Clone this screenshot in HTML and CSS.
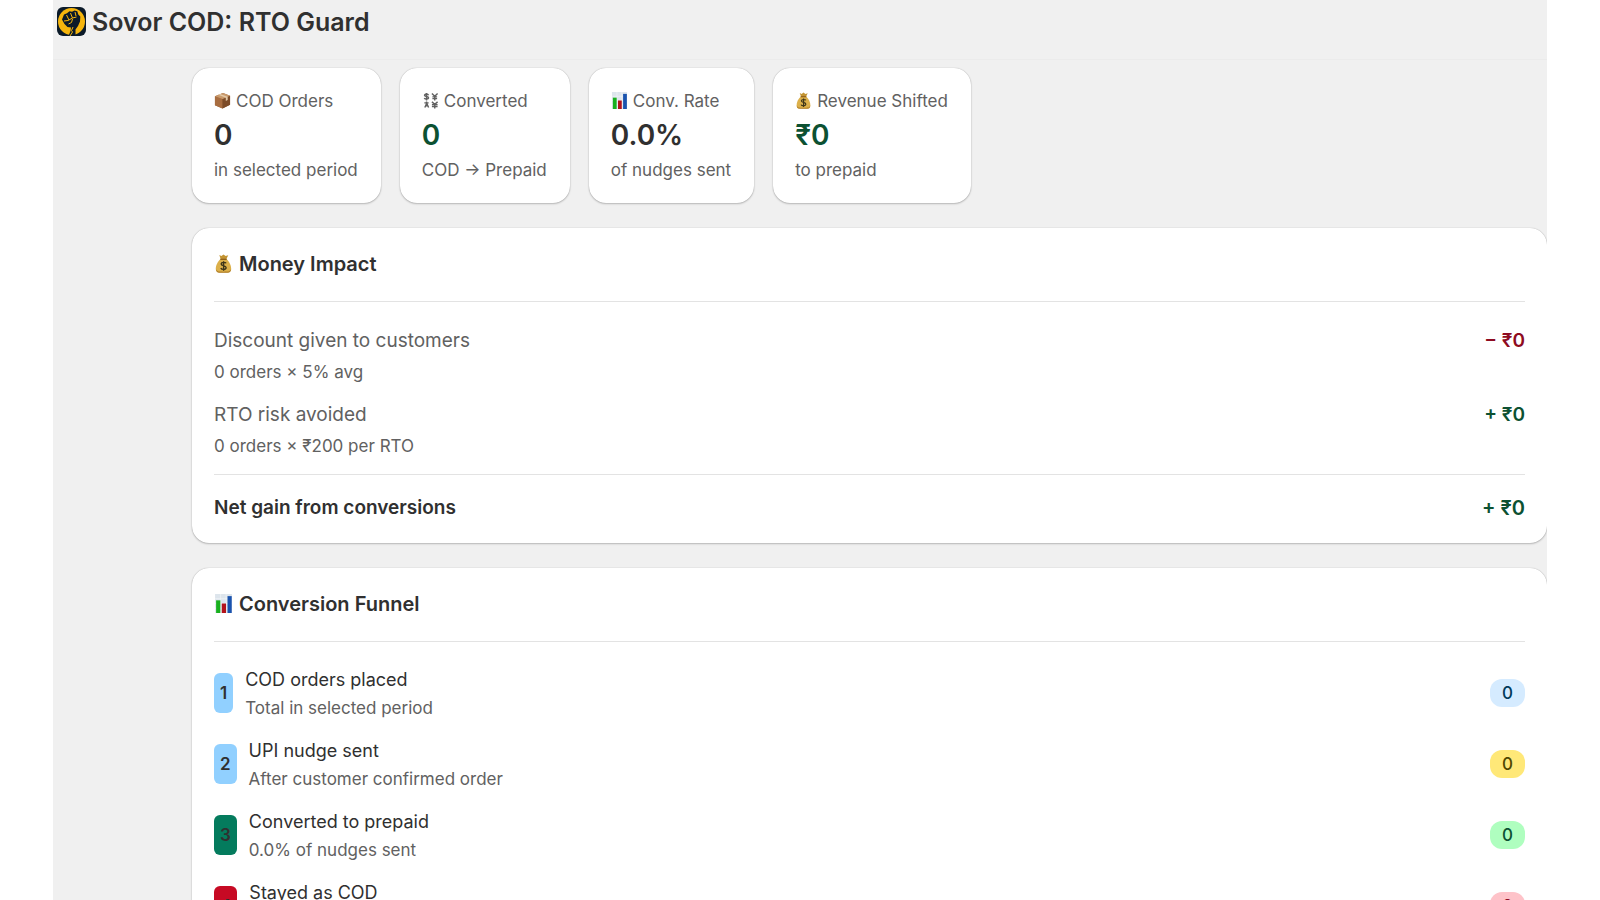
FILE: index.html
```html
<!DOCTYPE html>
<html lang="en">
<head>
<meta charset="utf-8">
<meta name="viewport" content="width=device-width, initial-scale=1">
<title>Sovor COD: RTO Guard</title>
<link rel="stylesheet" href="styles.css">
</head>
<body>
<svg class="defs" aria-hidden="true">
  <symbol id="bag" viewBox="0 0 18 18">
    <path d="M5 1l2 1 2-1.500 2 1.500 2.500-.7-2 4h-5z" fill="#c39432"/>
    <path d="M6.500 4.500h5c3 2.500 5 6.500 4.800 10-.1 2-1.500 3-3.300 3H5c-1.800 0-3.200-1-3.300-3-.2-3.500 1.800-7.500 4.800-10z" fill="#dcb04a"/>
    <path d="M2 14c.5 2.500 2 2.700 7 2.700s6.500-.2 7-2.700c.3 2.500-1 3.700-3 3.700H5c-2 0-3.300-1.200-3-3.700z" fill="#b07f28"/>
    <path d="M6 5h6" stroke="#8a5a17" stroke-width="1.200"/>
    <path d="M11.500 8.800C11 7.800 7 7.300 6.800 9.400 6.700 11.500 11.600 10.600 11.500 13c-.2 2.200-4.500 2-5 .3M9.100 6.800v9" fill="none" stroke="#3d3519" stroke-width="1.300"/>
  </symbol>
  <symbol id="chart" viewBox="0 0 18 18">
    <path d="M1 0h16v18H1z" fill="#dde5ec"/>
    <path d="M1 4.500h16M1 9h16M1 13.500h16M6.300 0v18M11.500 0v18" stroke="#f4f7fa" stroke-width=".6"/>
    <path d="M2 6h4v12H2z" fill="#18b01e"/>
    <path d="M7.400 9h4v9h-4z" fill="#b3131b"/>
    <path d="M12.800 2h4v16h-4z" fill="#1a53ae"/>
  </symbol>
  <symbol id="box" viewBox="0 0 18 18">
    <path d="M1 4.500L9.500 1 17 4v9.500L9 17.500 1 14z" fill="#9a6237"/>
    <path d="M1 4.500l8 3v10L1 14z" fill="#a86d40"/>
    <path d="M9 7.500L17 4v9.500l-8 4z" fill="#7d4c29"/>
    <path d="M1 4.500L9.500 1 17 4 9 7.500z" fill="#c99a6c"/>
    <path d="M4.500 3l8 3v3.500l2-1V5l-8-2.900z" fill="#e3c9a8"/>
  </symbol>
  <symbol id="exchange" viewBox="0 0 18 18">
    <g fill="none" stroke="currentColor" stroke-width="1.500">
      <path d="M7 3.500C6 1.500 2.500 2 2.700 3.600 2.900 5.200 7 4.400 7 6.300 6.800 8 3.200 8 2.400 6.400M4.800 1v8"/>
      <path d="M10.500 1.500l3 3 3-3M13.500 4.500V9M11 5.200h5M11 7h5"/>
      <path d="M2.500 11.500h4.500M4.800 10v2M3 16.500l2-4.500 2 4.500M3.500 14.500h3"/>
      <path d="M10.500 10.500l3 2.500 3-2.500M13.500 13v4.500M10.500 13.500h6M10.500 15.500h6"/>
    </g>
  </symbol>
</svg>
<div class="app">
  <header class="topbar">
    <svg class="logo" viewBox="0 0 29 29" aria-hidden="true">
      <rect width="29" height="29" rx="6" fill="#0b1a29"/>
      <circle cx="14.500" cy="14.500" r="13.500" fill="#f5b50d"/>
      <path d="M5 12.500l2-5 3-1.200 2.500-2 2.500.5 2.500-1.300 2.800.8 1 3.200 2 2-.3 5-2 4.500-2.500 3.500V29h-7l2-5 .5-3.500-3.500-.5-3-3z" fill="#0b1a29"/>
      <path d="M9.500 8l2.500 5M13.500 6l2 5M18 5l1 4M7 14l4-.5 4.500-2.500 4-1M15.500 12l-1 3.500-3 1.500M16 20l-1.500 3.500 1 1.500-2.500 4" fill="none" stroke="#f5b50d" stroke-width="1"/>
    </svg>
    <h1 class="app-name">Sovor COD: RTO Guard</h1>
  </header>
  <main class="content">
    <section class="stats" aria-label="Summary">
      <article class="card stat">
        <p class="caption"><svg class="icon" aria-hidden="true"><use href="#box"/></svg>COD Orders</p>
        <p class="figure">0</p>
        <p class="caption">in selected period</p>
      </article>
      <article class="card stat">
        <p class="caption"><svg class="icon" aria-hidden="true"><use href="#exchange"/></svg>Converted</p>
        <p class="figure good">0</p>
        <p class="caption">COD → Prepaid</p>
      </article>
      <article class="card stat">
        <p class="caption"><svg class="icon" aria-hidden="true"><use href="#chart"/></svg>Conv. Rate</p>
        <p class="figure">0.0%</p>
        <p class="caption">of nudges sent</p>
      </article>
      <article class="card stat">
        <p class="caption"><svg class="icon" aria-hidden="true"><use href="#bag"/></svg>Revenue Shifted</p>
        <p class="figure good">₹0</p>
        <p class="caption">to prepaid</p>
      </article>
    </section>

    <section class="card panel">
      <h2 class="panel-title"><svg class="icon large" aria-hidden="true"><use href="#bag"/></svg>Money Impact</h2>
      <div class="impact">
        <div class="impact-row">
          <div><p class="impact-label">Discount given to customers</p><p class="caption">0 orders × 5% avg</p></div>
          <p class="amount bad">− ₹0</p>
        </div>
        <div class="impact-row">
          <div><p class="impact-label">RTO risk avoided</p><p class="caption">0 orders × ₹200 per RTO</p></div>
          <p class="amount good">+ ₹0</p>
        </div>
      </div>
      <div class="impact-row net">
        <p class="net-label">Net gain from conversions</p>
        <p class="amount total good">+ ₹0</p>
      </div>
    </section>

    <section class="card panel">
      <h2 class="panel-title"><svg class="icon large" aria-hidden="true"><use href="#chart"/></svg>Conversion Funnel</h2>
      <ol class="funnel">
        <li class="step">
          <span class="number blue">1</span>
          <div class="step-text"><p class="step-name">COD orders placed</p><p class="caption">Total in selected period</p></div>
          <span class="badge info">0</span>
        </li>
        <li class="step">
          <span class="number blue">2</span>
          <div class="step-text"><p class="step-name">UPI nudge sent</p><p class="caption">After customer confirmed order</p></div>
          <span class="badge attention">0</span>
        </li>
        <li class="step">
          <span class="number green">3</span>
          <div class="step-text"><p class="step-name">Converted to prepaid</p><p class="caption">0.0% of nudges sent</p></div>
          <span class="badge success">0</span>
        </li>
        <li class="step">
          <span class="number red">4</span>
          <div class="step-text"><p class="step-name">Stayed as COD</p><p class="caption">Did not convert</p></div>
          <span class="badge critical">0</span>
        </li>
      </ol>
    </section>
  </main>
</div>
</body>
</html>
```
FILE: styles.css
```css
* {
  box-sizing: border-box;
}

body {
  margin: 0;
  padding: 0 53px;
  background: #fff;
  color: #303030;
  font-family: Inter, "Noto Sans", sans-serif;
  font-size: 18px;
  line-height: 28px;
}

h1,
h2,
p,
ol {
  margin: 0;
  padding: 0;
}

.defs {
  position: absolute;
  width: 0;
  height: 0;
}

.app {
  height: 100vh;
  overflow: hidden;
  background: #f0f0f0;
}

.topbar {
  display: flex;
  align-items: center;
  gap: 6px;
  height: 60px;
  padding: 0 4px 16px;
  border-bottom: 1px solid #ebebeb;
}

.logo {
  width: 29px;
  height: 29px;
}

.app-name {
  font-size: 25px;
  font-weight: 600;
  line-height: 36px;
}

.content {
  display: grid;
  gap: 25px;
  padding: 8px 0 0 139px;
}

.stats {
  display: flex;
  flex-wrap: wrap;
  gap: 19px;
}

.card {
  padding: 22px 22px 18px;
  border-radius: 17px;
  background: #fff;
  box-shadow: 0 1px 2px rgba(0, 0, 0, 0.22), 0 0 1px rgba(0, 0, 0, 0.3);
}

.stat {
  padding: 19px 23px 19px 22px;
}

.caption {
  color: #616161;
  font-size: 17px;
  line-height: 28px;
}

.figure {
  font-size: 28px;
  font-weight: 600;
  line-height: 41px;
}

.icon {
  width: 17px;
  height: 17px;
  margin-right: 5px;
  vertical-align: -2px;
}

.icon.large {
  width: 19px;
  height: 19px;
  margin-right: 6px;
}

.good {
  color: #0c5132;
}

.bad {
  color: #8e0b21;
}

.panel-title {
  padding-bottom: 23px;
  border-bottom: 1px solid #e3e3e3;
  font-size: 20px;
  font-weight: 600;
  line-height: 28px;
}

.impact {
  display: grid;
  gap: 12px;
  padding: 22px 0 14px;
  border-bottom: 1px solid #e3e3e3;
}

.impact-row {
  display: flex;
  justify-content: space-between;
}

.impact-label {
  color: #616161;
  font-size: 19px;
  line-height: 34px;
}

.amount {
  font-size: 19px;
  font-weight: 600;
  line-height: 34px;
}

.net {
  padding-top: 16px;
}

.net-label {
  font-size: 19px;
  font-weight: 600;
  line-height: 34px;
}

.amount.total {
  font-size: 20px;
}

.funnel {
  display: grid;
  gap: 13px;
  padding-top: 22px;
  list-style: none;
}

.step {
  display: flex;
  align-items: center;
}

.step-text {
  flex: 1;
  margin-left: 12px;
  padding-top: 2px;
}

.step-name {
  line-height: 28px;
}

.number {
  padding: 6px;
  border-radius: 6px;
  font-size: 17px;
  font-weight: 600;
  line-height: 28px;
}

.blue {
  background: #91d0ff;
}

.green {
  background: #047b5d;
}

.red {
  background: #c70a24;
}

.badge {
  padding: 0 12px;
  border-radius: 12px;
  font-size: 17px;
  font-weight: 500;
}

.info {
  background: #d5ebff;
  color: #003a5a;
}

.attention {
  background: #ffe878;
  color: #4f4700;
}

.success {
  background: #affebf;
  color: #0c5132;
}

.critical {
  background: #fec3c9;
  color: #8e0b21;
}
```
